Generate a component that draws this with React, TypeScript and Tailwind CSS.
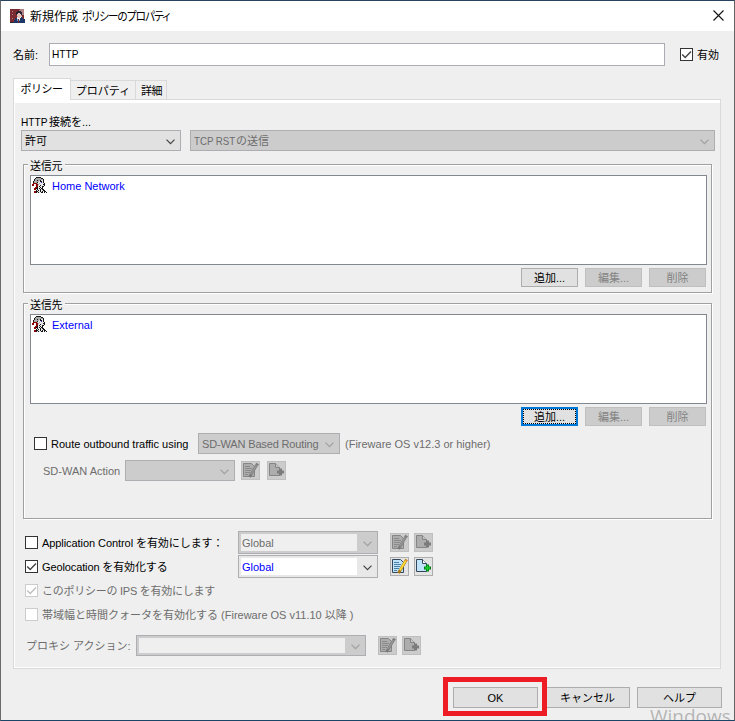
import React from 'react'

const FACE = [
    '....KKKKK......',
    '...KGGGGGKK....',
    '..KGGGGGGGGK...',
    '..KGGKGGKWWK...',
    '.KGGGGGWKKWK...',
    '.KGGGKWWWBWK...',
    '.RRRRGWGWWWWK..',
    'RR.WRRGWWWWKK..',
    'RR.WRRWWKWWWK..',
    '....RRWKWWKK...',
    '...RRKWWKWK....',
    '..RRKKWKWKK....',
    '..RRWKWWKWKK...',
    '....KWKWKWWKK..',
    '..RRKKWWKWKWKK.',
    '..RRKWKWWKK.K.K',
]

const LOGO = [
    'rrrrrrrrrraaaa.',
    'rrrrrrrrraaaaa.',
    'rrarrrrkkkkaaa.',
    'rrrrrrkkkkkkaa.',
    'rrrrrrkkppkkaa.',
    'rrarrrkppppkaa.',
    'rrrrrrrpppparr.',
    'rrrrrrrapppprr.',
    'rrrrrrrwppwnrr.',
    'rrarrnnwwwnnnr.',
    'rrrrrnnbrwnnnnn',
    'rrrrnnnbrbnnnnn',
    'rrrrnnnnrnnnnnn',
    'kkknnnnnrnnnnnn',
]

const COLORS: Record<string, string> = {
    K: '#151515',
    G: '#a9a9a9',
    W: '#e6e6e6',
    R: '#8b0000',
    B: '#3333dd',
    r: '#7b2a2f',
    a: '#b08486',
    k: '#2a2230',
    p: '#e3c3b9',
    w: '#eeeeee',
    n: '#1c3768',
    b: '#7f9cc8',
}

function Pixels({ rows }: { rows: string[] }) {
    return (
        <svg width={rows[0].length} height={rows.length} shapeRendering="crispEdges" className="shrink-0">
            {rows.map((row, y) =>
                row.split('').map((c, x) =>
                    c === '.' ? null : <rect key={`${x}-${y}`} x={x} y={y} width="1" height="1" fill={COLORS[c]} />
                )
            )}
        </svg>
    )
}

function Check({ checked, disabled }: { checked?: boolean; disabled?: boolean }) {
    return (
        <span className={`flex h-[13px] w-[13px] shrink-0 border bg-white ${disabled ? 'border-[#cccccc]' : 'border-[#333333]'}`}>
            {checked && (
                <svg width="11" height="11" viewBox="0 0 11 11" fill="none">
                    <path d="M1.2 5.5 4.2 8.5 10 2.5" stroke={disabled ? '#bfbfbf' : '#444444'} strokeWidth="1.4" />
                </svg>
            )}
        </span>
    )
}

function Chevron({ disabled }: { disabled?: boolean }) {
    return (
        <svg width="9" height="6" viewBox="0 0 9 6" fill="none" className="mt-[2px] shrink-0">
            <path d="M0.5 0.7 4.5 4.7 8.5 0.7" stroke={disabled ? '#a0a0a0' : '#444444'} strokeWidth="1.2" />
        </svg>
    )
}

function Select({ className, disabled, children }: { className: string; disabled?: boolean; children?: React.ReactNode }) {
    return (
        <div
            className={`flex h-[21px] shrink-0 items-center justify-between border border-[#adadb2] pl-[3px] pr-[5px] ${
                disabled ? 'bg-[#cccccc] text-[#6d6d6d]' : 'bg-[#e1e1e1]'
            } ${className}`}
        >
            <span className="pt-px">{children}</span>
            <Chevron disabled={disabled} />
        </div>
    )
}

function Combo({ className, disabled, children }: { className: string; disabled?: boolean; children?: React.ReactNode }) {
    return (
        <div
            className={`flex shrink-0 items-center border-[#adadb2] border p-[2px] pr-[5px] ${
                disabled ? 'bg-[#cccccc] text-[#6d6d6d]' : 'bg-[#e8e8e8] text-[#0000ff]'
            } ${className}`}
        >
            <div className={`mr-[6px] flex h-full flex-1 items-center pl-px pt-px ${disabled ? 'bg-[#efefef]' : 'bg-white'}`}>{children}</div>
            <Chevron disabled={disabled} />
        </div>
    )
}

function Button({ className, disabled, children }: { className: string; disabled?: boolean; children: React.ReactNode }) {
    return (
        <button
            className={`flex shrink-0 items-center justify-center border pt-[2px] ${
                disabled ? 'border-[#bfbfbf] bg-[#cccccc] text-[#838383]' : 'border-[#adadad] bg-[#e1e1e1] text-black'
            } ${className}`}
        >
            {children}
        </button>
    )
}

function IconButton({ kind, disabled }: { kind: 'edit' | 'add'; disabled?: boolean }) {
    const line = disabled ? '#858585' : '#36465a'
    const fill = disabled ? '#adadad' : '#bfe4fa'
    return (
        <span
            className={`flex h-[19px] w-[19px] shrink-0 items-center justify-center border ${
                disabled ? 'border-[#bfbfbf] bg-[#cccccc]' : 'border-[#adadad] bg-[#e4e4e4]'
            }`}
        >
            <svg width="17" height="17" viewBox="0 0 17 17" fill="none">
                {kind === 'edit' ? (
                    <>
                        <path d="M1.5 1.5h8l3 3v10h-11z" fill={fill} stroke={line} />
                        <path d="M3 4.5h5M3 6.5h7M3 8.5h6M3 10.5h5M3 12.5h3" stroke={disabled ? '#8a8a8a' : '#4b7fa6'} />
                        <path d="M15.5 1.5 9 12.5l-1.5 2.5" stroke={disabled ? '#7c7c7c' : '#a87512'} strokeWidth="2.8" />
                        <path d="M15.2 2 9 12.3" stroke={disabled ? '#939393' : '#ffdf35'} strokeWidth="1.8" />
                        <path d="m14.3 2 2 1.2" stroke={disabled ? '#7c7c7c' : '#e8893b'} strokeWidth="1.4" />
                    </>
                ) : (
                    <>
                        <path d="M1.5 1.5h6l4 4v8h-10z" fill={fill} stroke={line} />
                        <path d="M7.5 1.5v4h4" fill={disabled ? '#c4c4c4' : '#ffffff'} stroke={line} />
                        <path d="M12.5 6.5v7M9 10h7" stroke={disabled ? '#7c7c7c' : '#007a18'} strokeWidth="3" />
                        <path d="M12.5 7.5v5M10 10h5" stroke={disabled ? '#7c7c7c' : '#18d22a'} strokeWidth="1.5" />
                    </>
                )}
            </svg>
        </span>
    )
}

function Group({ title, className, children }: { title: string; className: string; children: React.ReactNode }) {
    return (
        <section className={`relative border border-[#a0a0a0] shadow-[1px_1px_0_white,inset_1px_1px_0_white] ${className}`}>
            <h2 className="absolute -top-[8px] left-[4px] h-[17px] w-[37px] bg-[#efefef] pl-[2px] text-[11px] leading-[18px] tracking-[-0.3px]">{title}</h2>
            {children}
        </section>
    )
}

function NetworkList({ name }: { name: string }) {
    return (
        <div className="flex h-[90px] items-start border border-[#828790] bg-white pl-px pt-px text-[#0000ff]">
            <Pixels rows={FACE} />
            <span className="ml-[5px] h-[18px] leading-[19px] text-[11px]">{name}</span>
        </div>
    )
}

function ListButtons({ focused }: { focused?: boolean }) {
    return (
        <div className="mt-[3px] flex justify-end gap-[7px] pr-px text-[11px]">
            {focused ? (
                <button className="h-[19px] w-[57px] border-2 border-[#0078d7] bg-[#e1e1e1]">
                    <span className="flex h-full items-center justify-center border border-dotted border-black pt-[2px]">追加...</span>
                </button>
            ) : (
                <Button className="h-[19px] w-[57px]">追加...</Button>
            )}
            <Button disabled className="h-[19px] w-[57px]">編集...</Button>
            <Button disabled className="h-[19px] w-[57px]">削除</Button>
        </div>
    )
}

export default function App() {
    return (
        <main className="relative flex h-[721px] w-[735px] flex-col overflow-hidden whitespace-nowrap border border-t-[#27435f] border-r-[#646464] border-b-[#1b4566] border-l-[#6b6b6b] bg-[#efefef] text-[11px] leading-none text-black [font-family:'Liberation_Sans','Noto_Sans_CJK_JP',sans-serif]">
            <header className="flex h-[30px] shrink-0 items-center bg-white pl-[9px] pr-[10px]">
                <Pixels rows={LOGO} />
                <h1 className="ml-[5px] flex text-[12px] [font-family:'Noto_Sans_CJK_JP',sans-serif]">
                    <span>新規作成</span>
                    <span className="ml-[4px] inline-block origin-left scale-x-[0.88] tracking-[-1px] [font-feature-settings:'palt']">ポリシーのプロパティ</span>
                </h1>
                <svg width="11" height="11" viewBox="0 0 11 11" className="mb-px ml-auto" stroke="#111111" strokeWidth="1.1">
                    <path d="M0.5 0.5 10.5 10.5M10.5 0.5 0.5 10.5" />
                </svg>
            </header>

            <div className="mt-[12px] flex h-[23px] shrink-0 items-center pl-[12px]">
                <label className="w-[36px] pt-[2px]">名前:</label>
                <div className="flex h-full w-[616px] items-center border border-[#abadb3] bg-white pl-[2px] pt-px">
                    <span className="inline-block origin-left scale-x-[0.88] text-[11.5px]">HTTP</span>
                </div>
                <div className="ml-[15px] flex items-center gap-[4px]">
                    <Check checked />
                    <span className="pt-[2px]">有効</span>
                </div>
            </div>

            <nav className="z-10 mt-[12px] flex h-[22px] shrink-0 items-end pl-[12px]">
                <div className="flex h-[22px] w-[58px] items-center justify-center border border-b-0 border-[#d9d9d9] bg-white pb-px pr-px tracking-[-0.5px]">ポリシー</div>
                <div className="flex h-[20px] w-[65px] items-center justify-center border border-l-0 border-[#d9d9d9] pt-[2px]">プロパティ</div>
                <div className="flex h-[20px] w-[31px] items-center justify-center border border-l-0 border-[#d9d9d9] pl-px pt-[2px] tracking-[-0.5px]">詳細</div>
            </nav>

            <div className="-mt-px ml-[12px] flex h-[570px] w-[708px] shrink-0 flex-col border border-[#d9d9d9] shadow-[inset_1px_3px_0_white,inset_0_-1px_0_white]">
                <div className="mt-[14px] flex h-[16px] pl-[7px] leading-[16px]">
                    <span className="w-[28px] origin-left scale-x-[0.88] text-[11.5px]">HTTP</span>
                    接続を...
                </div>
                <div className="flex gap-[9px] pl-[7px]">
                    <Select className="w-[160px]">許可</Select>
                    <Select disabled className="w-[525px]">
                        <span className="inline-block w-[42px] origin-left scale-x-[0.88]">TCP RST</span>の送信
                    </Select>
                </div>

                <Group title="送信元" className="ml-[9px] mt-[13px] h-[129px] w-[689px] pl-[6px] pt-[10px]">
                    <div className="w-[677px]">
                        <NetworkList name="Home Network" />
                        <ListButtons />
                    </div>
                </Group>

                <Group title="送信先" className="ml-[9px] mt-[10px] h-[216px] w-[689px] pl-[6px] pt-[10px]">
                    <div className="w-[677px]">
                        <NetworkList name="External" />
                        <ListButtons focused />
                    </div>
                    <div className="mt-[7px] flex h-[21px] items-center pl-[4px]">
                        <Check />
                        <span className="ml-[4px] w-[147px] pt-px">Route outbound traffic using</span>
                        <Select disabled className="w-[142px]">
                            <span className="tracking-[-0.15px]">SD-WAN Based Routing</span>
                        </Select>
                        <span className="ml-[5px] pt-px text-[#6d6d6d]">(Fireware OS v12.3 or higher)</span>
                    </div>
                    <div className="mt-[6px] flex h-[21px] items-center pl-[13px] text-[#6d6d6d]">
                        <span className="w-[82px] pt-px">SD-WAN Action</span>
                        <Select disabled className="w-[110px]" />
                        <div className="ml-[6px] flex gap-[7px]">
                            <IconButton kind="edit" disabled />
                            <IconButton kind="add" disabled />
                        </div>
                    </div>
                </Group>

                <div className="mt-[12px] flex h-[24px] items-start pl-[11px]">
                    <div className="flex h-[23px] w-[213px] items-center gap-[4px]">
                        <Check />
                        <span className="pt-px tracking-[-0.07px]">Application Control を有効にします：</span>
                    </div>
                    <Combo disabled className="h-[23px] w-[140px]">Global</Combo>
                    <div className="ml-[12px] flex h-[23px] items-center gap-[5px]">
                        <IconButton kind="edit" disabled />
                        <IconButton kind="add" disabled />
                    </div>
                </div>
                <div className="flex h-[24px] items-start pl-[11px]">
                    <div className="flex h-[23px] w-[213px] items-center gap-[4px]">
                        <Check checked />
                        <span className="pt-px tracking-[-0.12px]">Geolocation を有効化する</span>
                    </div>
                    <Combo className="h-[23px] w-[140px]">Global</Combo>
                    <div className="ml-[12px] flex h-[23px] items-center gap-[5px]">
                        <IconButton kind="edit" />
                        <IconButton kind="add" />
                    </div>
                </div>
                <div className="flex h-[24px] items-center gap-[4px] pl-[11px] pb-px text-[#6d6d6d]">
                    <Check checked disabled />
                    <span className="pt-px tracking-[-0.25px]">このポリシーの IPS を有効にします</span>
                </div>
                <div className="flex h-[24px] items-center gap-[4px] pl-[11px] pb-px text-[#6d6d6d]">
                    <Check disabled />
                    <span className="pt-px">帯域幅と時間クォータを有効化する (Fireware OS v11.10 以降 )</span>
                </div>
                <div className="mt-[8px] flex h-[21px] items-center pl-[12px] text-[#6d6d6d]">
                    <span className="w-[110px] pt-px">プロキシ アクション:</span>
                    <Combo disabled className="h-[21px] w-[230px]" />
                    <div className="ml-[12px] flex gap-[5px]">
                        <IconButton kind="edit" disabled />
                        <IconButton kind="add" disabled />
                    </div>
                </div>
            </div>

            <footer className="mt-[18px] flex justify-end gap-[7px] pr-[12px]">
                <Button className="h-[21px] w-[85px]">OK</Button>
                <Button className="h-[21px] w-[85px]">キャンセル</Button>
                <Button className="h-[21px] w-[85px]">ヘルプ</Button>
            </footer>

            {/* highlight around the OK button */}
            <div className="absolute left-[442px] top-[676px] h-[39px] w-[104px] border-[5px] border-[#ee1c24]" />
            <div className="absolute left-[649px] top-[706px] text-[19px] text-[#8d8d8d]/60 [font-family:'Open_Sans',sans-serif]">Windows</div>
        </main>
    )
}
